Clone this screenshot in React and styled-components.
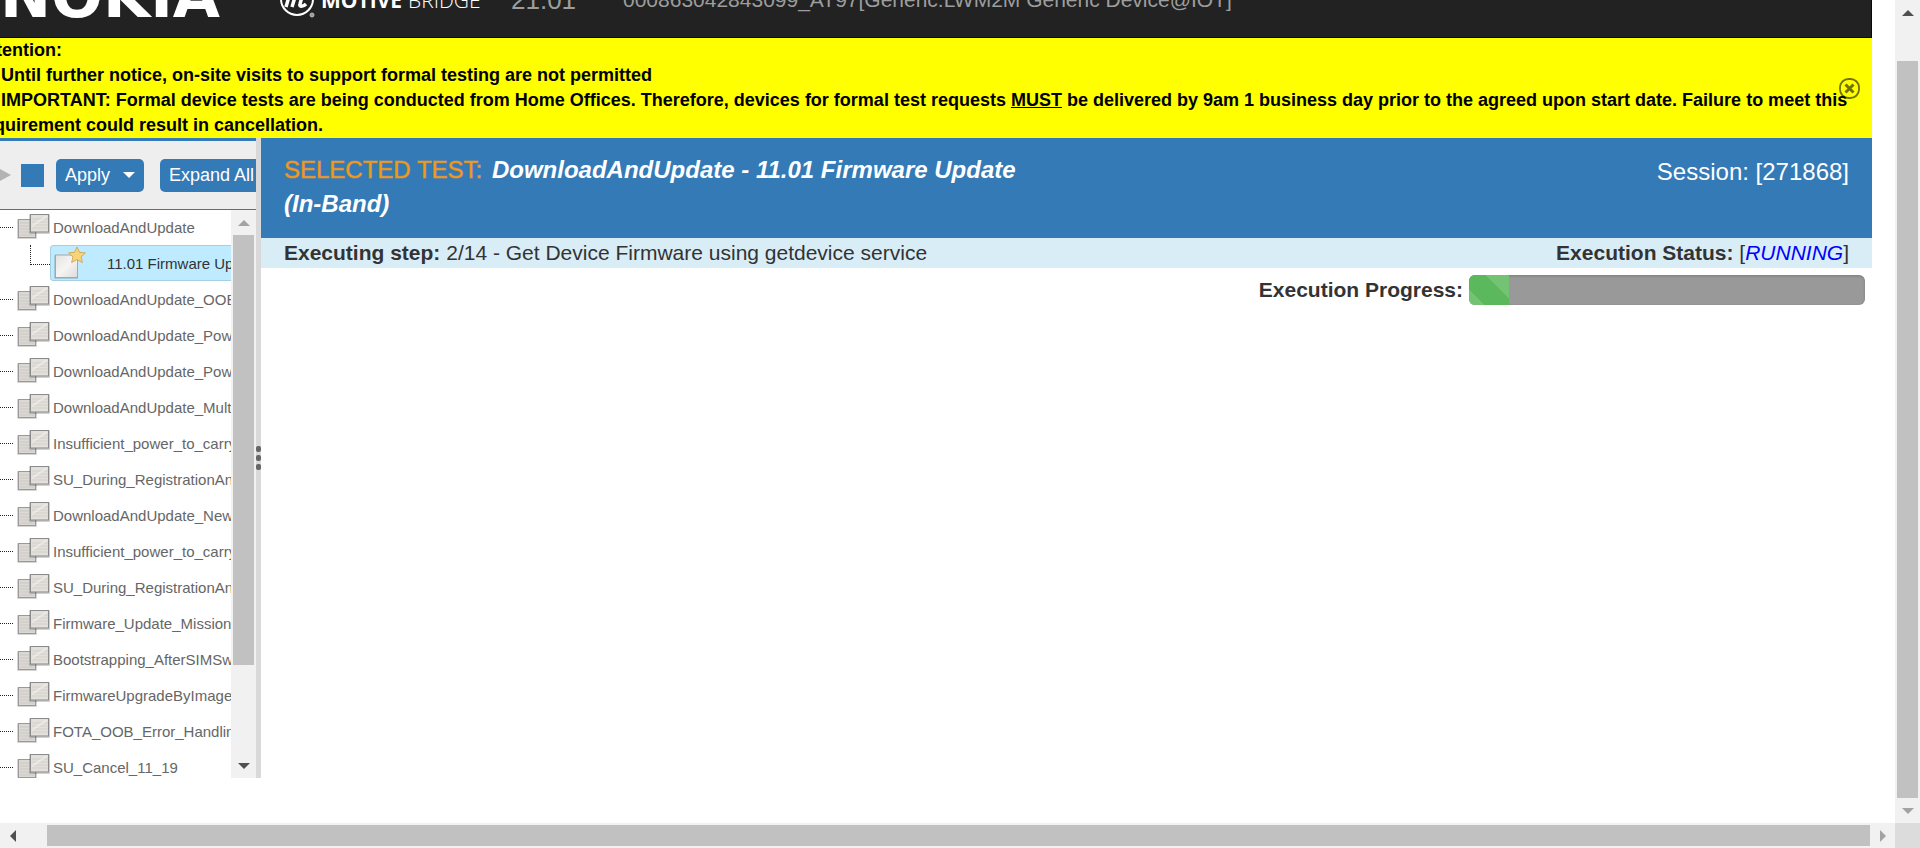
import React from "react";
import styled, { createGlobalStyle } from "styled-components";

const BLUE = "#337ab7";

const GlobalStyle = createGlobalStyle`
  * { box-sizing: border-box; }
  body {
    margin: 0;
    background: #fff;
    color: #333;
    font-family: "Liberation Sans", Arial, sans-serif;
    overflow: hidden;
  }
  h1, p, ul { margin: 0; padding: 0; }
  button { font-family: inherit; cursor: pointer; }
`;

const Screen = styled.div`
  display: grid;
  grid-template-columns: minmax(0, 1fr) 25px;
  grid-template-rows: minmax(0, 1fr) 25px;
  height: 100vh;
`;

const Page = styled.div`
  display: flex;
  flex-direction: column;
  padding-right: 23px;
  padding-bottom: 45px;
  overflow: hidden;
`;

const TopBar = styled.header`
  display: flex;
  align-items: flex-end;
  flex: none;
  height: 38px;
  background: #222;
  border: solid #080808;
  border-width: 0 1px 1px 0;
  color: #9d9d9d;
  overflow: hidden;
  white-space: nowrap;
`;

const Nokia = styled.span`
  width: 279px;
  color: #fff;
  font: 700 61px/60px "DejaVu Sans", sans-serif;
  padding-bottom: 11px;
`;

const Motive = styled.span`
  display: flex;
  align-items: flex-end;
  width: 232px;
  color: #fff;
  font: 300 21px/24px "Open Sans", sans-serif;
  padding-bottom: 25px;
  gap: 6px;

  b { font-weight: 700; }
  svg { margin-bottom: -6px; }
`;

const Version = styled.span`
  width: 112px;
  font-size: 26px;
  line-height: 30px;
  padding-bottom: 22px;
`;

const Device = styled.span`
  font-size: 21px;
  line-height: 26px;
  padding-bottom: 24px;
`;

const Notice = styled.section`
  position: relative;
  flex: none;
  background: #ff0;
  color: #000;
  font-size: 18px;
  font-weight: 700;
  line-height: 25px;
  overflow: hidden;
`;

const NoticeText = styled.div`
  margin-left: -23px;
  white-space: nowrap;
`;

const NoticeItem = styled.p`
  padding-left: 4px;
`;

const CloseButton = styled.button`
  position: absolute;
  top: 40px;
  right: 12px;
  padding: 0;
  border: 0;
  background: none;
  opacity: 0.55;
  line-height: 0;
`;

const Workspace = styled.div`
  display: flex;
  flex: 1;
  min-height: 0;
`;

const Sidebar = styled.aside`
  display: flex;
  flex-direction: column;
  flex: none;
  width: 256px;
  border-top: 3px solid ${BLUE};
  overflow: hidden;
`;

const Toolbar = styled.div`
  display: flex;
  align-items: center;
  flex: none;
  height: 69px;
  background: #eee;
  border-bottom: 1px solid ${BLUE};
`;

const PlayButton = styled.button`
  flex: none;
  width: 21px;
  padding: 0;
  border: 0;
  background: none;
  line-height: 0;
  text-align: left;
`;

const StopButton = styled.button`
  flex: none;
  width: 23px;
  height: 23px;
  margin-right: 12px;
  padding: 0;
  border: 0;
  background: ${BLUE};
`;

const ToolButton = styled.button`
  display: flex;
  align-items: center;
  justify-content: space-between;
  flex: none;
  width: ${(p) => p.$width}px;
  height: 33px;
  margin-right: 16px;
  padding: 0 9px;
  border: 0;
  border-radius: 5px;
  background: ${BLUE};
  color: #fff;
  font-size: 18px;
  white-space: nowrap;
`;

const TreePanel = styled.div`
  display: flex;
  flex: 1;
  min-height: 0;
`;

const Tree = styled.ul`
  flex: 1;
  min-width: 0;
  margin-top: -1px;
  overflow: hidden;
  list-style: none;
`;

const TreeRow = styled.li`
  display: flex;
  align-items: center;
  height: 36px;
  color: #666;
  font-size: 15px;
  white-space: nowrap;

  svg { flex: none; }

  &::before {
    content: "";
    flex: none;
    width: 13px;
    margin-right: 3px;
    border-top: 1px dotted #222;
  }
`;

const ChildRow = styled.li`
  display: flex;
  height: 36px;
  padding-left: 30px;
  font-size: 15px;
  white-space: nowrap;

  &::before {
    content: "";
    flex: none;
    width: 19px;
    height: 19px;
    border: dotted #222;
    border-width: 0 0 1px 1px;
  }
`;

const Selected = styled.span`
  display: flex;
  align-items: center;
  flex: none;
  gap: 18px;
  width: 240px;
  padding-left: 3px;
  background: #beebff;
  border: 1px solid #a5cfe2;
  border-radius: 3px;
`;

const Bar = styled.div`
  display: flex;
  flex-direction: ${(p) => (p.$horizontal ? "row" : "column")};
  flex: none;
  min-width: 25px;
  background: #f1f1f1;
`;

const ArrowButton = styled.button`
  display: flex;
  align-items: center;
  justify-content: center;
  flex: none;
  width: 25px;
  height: 25px;
  padding: 0;
  border: 0;
  background: none;
  color: ${(p) => (p.$dim ? "#a3a3a3" : "#505050")};

  svg { transform: rotate(${(p) => p.$turn}deg); }
`;

const Track = styled.div`
  display: flex;
  flex: 1;
  min-width: 0;
  min-height: 0;
  flex-direction: ${(p) => (p.$horizontal ? "row" : "column")};
  padding: ${(p) => (p.$horizontal ? "2px 0 2px 22px" : `${p.$lead || 0}px 2px 0`)};
`;

const Thumb = styled.div`
  flex: 0 0 ${(p) => p.$size}%;
  background: #c1c1c1;
`;

const Corner = styled.div`
  background: #dcdcdc;
`;

const Splitter = styled.div`
  display: flex;
  flex-direction: column;
  align-items: center;
  justify-content: center;
  gap: 3px;
  flex: none;
  width: 5px;
  background: #d9d9d9;

  i {
    width: 5px;
    height: 6px;
    border-radius: 2px;
    background: #666;
  }
`;

const Main = styled.main`
  flex: 1;
  min-width: 0;
`;

const TestHeader = styled.div`
  display: flex;
  justify-content: space-between;
  height: 100px;
  padding: 15px 23px;
  background: ${BLUE};
  color: #fff;
  font-size: 24px;
  line-height: 34px;
`;

const TestTitle = styled.h1`
  width: 50%;
  font-size: 24px;
  font-weight: 700;
  font-style: italic;
`;

const TitleLabel = styled.span`
  margin-right: 3px;
  color: #f0981e;
  font-weight: 400;
  font-style: normal;
  -webkit-text-stroke: 1px rgba(240, 152, 30, 0.5);
`;

const Unbroken = styled.span`
  white-space: nowrap;
`;

const Session = styled.p`
  padding-top: 2px;
`;

const StatusRow = styled.div`
  display: flex;
  justify-content: space-between;
  padding: 0 23px;
  background: #d9edf7;
  font-size: 21px;
  line-height: 30px;

  em { color: #00f; }
`;

const ProgressRow = styled.div`
  display: flex;
  justify-content: flex-end;
  gap: 6px;
  padding: 7px 7px 0 0;
  font-size: 21px;
  font-weight: 700;
  line-height: 30px;
`;

const Progress = styled.div`
  width: 396px;
  height: 30px;
  border-radius: 6px;
  background: #999;
  box-shadow: inset 0 1px 3px rgba(0, 0, 0, 0.2);
  overflow: hidden;
`;

const ProgressFill = styled.div`
  height: 100%;
  background: #5cb85c
    linear-gradient(45deg, rgba(255, 255, 255, 0.15) 25%, transparent 25%, transparent 50%,
      rgba(255, 255, 255, 0.15) 50%, rgba(255, 255, 255, 0.15) 75%, transparent 75%) 16px 0 / 62px 62px;
`;

const groups = [
  "DownloadAndUpdate_OOB",
  "DownloadAndUpdate_Power",
  "DownloadAndUpdate_Power",
  "DownloadAndUpdate_Multiple",
  "Insufficient_power_to_carry",
  "SU_During_RegistrationAnd",
  "DownloadAndUpdate_New",
  "Insufficient_power_to_carry",
  "SU_During_RegistrationAnd",
  "Firmware_Update_Mission",
  "Bootstrapping_AfterSIMSwap",
  "FirmwareUpgradeByImage",
  "FOTA_OOB_Error_Handling",
  "SU_Cancel_11_19",
];

function GroupIcon() {
  return (
    <svg width="37" height="30" viewBox="0 0 37 30" aria-hidden="true">
      <rect x="1" y="7" width="20" height="20" rx="1" fill="#000" opacity=".16" />
      <rect x="2.5" y="7.500" width="17" height="18" fill="#dcd9d4" stroke="#999" />
      <path d="M4 11h14M4 14h14M4 17h14M4 20h14M4 23h14" stroke="#cbc8c3" />
      <rect x="13" y="2" width="21" height="20" rx="1" fill="#000" opacity=".18" />
      <rect x="14.500" y="2.500" width="18" height="17.500" fill="#e3e0db" stroke="#8a8a8a" />
      <path d="M16 7h16M16 10h16M16 13h16M16 16h16" stroke="#d3d0cb" />
      <path d="M16 14L31 4" stroke="#f5f4f2" strokeWidth="2" opacity=".6" />
    </svg>
  );
}

function TestIcon() {
  return (
    <svg width="35" height="34" viewBox="0 0 35 34" aria-hidden="true">
      <defs>
        <linearGradient id="paper" x1="0" y1="0" x2="1" y2="1">
          <stop offset="0" stopColor="#e4e1df" />
          <stop offset=".5" stopColor="#f6f5f4" />
          <stop offset="1" stopColor="#dedbd8" />
        </linearGradient>
      </defs>
      <rect x="0" y="9" width="24" height="24" rx="1" fill="#000" opacity=".14" />
      <rect x="1.500" y="9" width="22" height="22.500" fill="url(#paper)" stroke="#aaa6a2" />
      <path d="M23 1l2.500 5.300 6 .6-4.500 4 1.400 5.600L23 13.600l-5.400 2.900L19 10.900l-4.500-4 6-.6z" fill="#f9d477" stroke="#d3ab60" />
    </svg>
  );
}

function Arrow(props) {
  return (
    <ArrowButton type="button" tabIndex={-1} {...props}>
      <svg width="12" height="6" viewBox="0 0 12 6"><path d="M0 6L6 0l6 6z" fill="currentColor" /></svg>
    </ArrowButton>
  );
}

export default function App() {
  return (
    <>
      <GlobalStyle />
      <Screen>
        <Page>
          <TopBar>
            <Nokia>NOKIA</Nokia>
            <Motive>
              <svg width="36" height="36" viewBox="0 0 36 36" fill="none" aria-hidden="true">
                <circle cx="18" cy="17" r="16" stroke="#fff" strokeWidth="2" />
                <path d="M7 25l4-14M11 13c4-5 7-3 5 2l-3 10M17 13c4-5 8-3 6 2l-2 7c-1 3 3 3 6 0" stroke="#fff" strokeWidth="3.500" />
                <circle cx="33" cy="33" r="2" fill="#999" stroke="#bbb" />
              </svg>
              <b>MOTIVE</b>
              <span>BRIDGE</span>
            </Motive>
            <Version>21.01</Version>
            <Device>000863042843099_AT97[Generic.LWM2M Generic Device@IOT]</Device>
          </TopBar>

          <Notice>
            <NoticeText>
              <p>Attention:</p>
              <NoticeItem>
                1. Until further notice, on-site visits to support formal testing are not permitted
              </NoticeItem>
              <NoticeItem>
                2. IMPORTANT: Formal device tests are being conducted from Home Offices. Therefore, devices for formal
                test requests <u>MUST</u> be delivered by 9am 1 business day prior to the agreed upon start date. Failure
                to meet this
              </NoticeItem>
              <p>requirement could result in cancellation.</p>
            </NoticeText>
            <CloseButton type="button" aria-label="Close notice">
              <svg width="21" height="21" viewBox="0 0 21 21" fill="none" stroke="#000">
                <rect x="1" y="1" width="19" height="19" rx="8.500" strokeWidth="1.800" />
                <path d="M6.500 6.500l8 8M14.500 6.500l-8 8" strokeWidth="3" />
              </svg>
            </CloseButton>
          </Notice>

          <Workspace>
            <Sidebar>
              <Toolbar>
                <PlayButton type="button" aria-label="Run">
                  <svg width="11" height="14" viewBox="0 0 11 14"><path d="M0 1l11 6-11 6z" fill="#b3b3b3" /></svg>
                </PlayButton>
                <StopButton type="button" aria-label="Stop" />
                <ToolButton type="button" $width={88}>
                  Apply
                  <svg width="12" height="6" viewBox="0 0 12 6"><path d="M0 0h12L6 6z" fill="#fff" /></svg>
                </ToolButton>
                <ToolButton type="button" $width={104}>Expand All</ToolButton>
              </Toolbar>
              <TreePanel>
                <Tree>
                  <TreeRow><GroupIcon />DownloadAndUpdate</TreeRow>
                  <ChildRow>
                    <Selected><TestIcon />11.01 Firmware Update</Selected>
                  </ChildRow>
                  {groups.map((name, i) => (
                    <TreeRow key={i}><GroupIcon />{name}</TreeRow>
                  ))}
                </Tree>
                <Bar>
                  <Arrow $turn={0} $dim aria-label="Scroll tests up" />
                  <Track><Thumb $size={83} /></Track>
                  <Arrow $turn={180} aria-label="Scroll tests down" />
                </Bar>
              </TreePanel>
            </Sidebar>
            <Splitter><i /><i /><i /></Splitter>
            <Main>
              <TestHeader>
                <TestTitle>
                  <TitleLabel>SELECTED TEST:</TitleLabel> DownloadAndUpdate - 11.01 Firmware Update{" "}
                  <Unbroken>(In-Band)</Unbroken>
                </TestTitle>
                <Session>Session: [271868]</Session>
              </TestHeader>
              <StatusRow>
                <p><b>Executing step:</b> 2/14 - Get Device Firmware using getdevice service</p>
                <p><b>Execution Status:</b> [<em>RUNNING</em>]</p>
              </StatusRow>
              <ProgressRow>
                <span id="progress-label">Execution Progress:</span>
                <Progress role="progressbar" aria-labelledby="progress-label" aria-valuenow={10}>
                  <ProgressFill style={{ width: "10%" }} />
                </Progress>
              </ProgressRow>
            </Main>
          </Workspace>
        </Page>

        <Bar>
          <Arrow $turn={0} aria-label="Scroll up" />
          <Track $lead={36}><Thumb $size={100} /></Track>
          <Arrow $turn={180} $dim aria-label="Scroll down" />
        </Bar>
        <Bar $horizontal>
          <Arrow $turn={270} aria-label="Scroll left" />
          <Track $horizontal><Thumb $size={100} /></Track>
          <Arrow $turn={90} $dim aria-label="Scroll right" />
        </Bar>
        <Corner />
      </Screen>
    </>
  );
}
